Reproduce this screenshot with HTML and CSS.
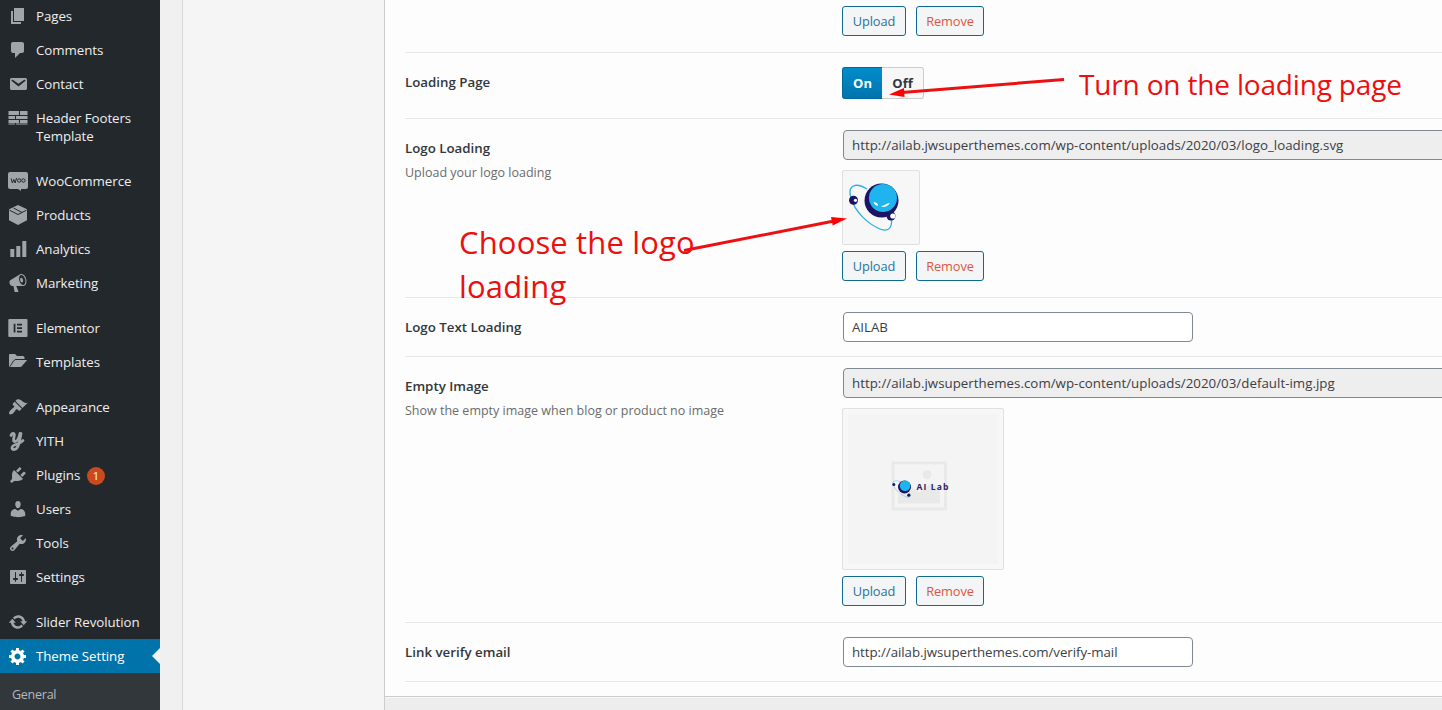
FILE: index.html
```
<!DOCTYPE html>
<html lang="en">
<head>
<meta charset="utf-8">
<title>Theme Setting</title>
<link rel="stylesheet" href="styles.css">
</head>
<body>
<div class="admin">
  <nav class="menu">
    <a class="item"><svg class="icon" viewBox="0 0 20 20"><path d="M6 15V2h10v13H6zm-1 1h8v2H3V5h2v11z"/></svg><span>Pages</span></a>
    <a class="item"><svg class="icon" viewBox="0 0 20 20"><path d="M5 2h9c1.1 0 2 .9 2 2v7c0 1.1-.9 2-2 2h-2l-5 5v-5H5c-1.1 0-2-.9-2-2V4c0-1.1.9-2 2-2z"/></svg><span>Comments</span></a>
    <a class="item"><svg class="icon" viewBox="0 0 20 20"><path d="M3.87 4h13.25C18.37 4 19 4.59 19 5.79v8.42c0 1.19-.63 1.79-1.88 1.79H3.87c-1.25 0-1.88-.6-1.88-1.79V5.79c0-1.2.63-1.79 1.88-1.79zm6.62 8.6l6.74-5.53c.24-.2.43-.66.13-1.07-.29-.41-.82-.42-1.17-.17l-5.7 3.86L4.8 5.83c-.35-.25-.88-.24-1.17.17-.3.41-.11.87.13 1.07z"/></svg><span>Contact</span></a>
    <a class="item"><svg class="icon" viewBox="0 0 20 20"><path d="M.5 3H11v4H.5zM12 3h7.500v4H12zM.5 8H7v3H.5zM8 8h11.500v3H8zM.5 12h10.500v3H.5zM12 12h7.500v3H12zM.5 15.600H7v.8H.5zM8 15.600h11.500v.8H8z"/></svg><span>Header Footers Template</span></a>
    <div class="separator"></div>
    <a class="item"><svg class="icon" viewBox="0 0 20 20"><path d="M2 1h16q2 0 2 2v13q0 2-2 2h-5v2l-3-2H2q-2 0-2-2V3q0-2 2-2z"/><path class="cut-line" d="M3.200 7.500l1.200 4.500 1.500-3.500 1.300 3.500 1.300-5"/><circle class="cut-line" cx="11.200" cy="9.500" r="1.700"/><circle class="cut-line" cx="15.400" cy="9.500" r="1.700"/></svg><span>WooCommerce</span></a>
    <a class="item"><svg class="icon" viewBox="0 0 20 20"><path d="M10 0l9 4.300v11L10 20l-9-4.700v-11z"/><path class="cut-line" d="M1.500 5.200L10 9.500l8.500-4.300M5.500 3l8.500 4.500"/></svg><span>Products</span></a>
    <a class="item"><svg class="icon" viewBox="0 0 20 20"><path d="M18 18V2h-4v16h4zm-6 0V7H8v11h4zm-6 0v-8H2v8h4z" transform="translate(.3 0)"/></svg><span>Analytics</span></a>
    <a class="item"><svg class="icon" viewBox="0 0 20 20"><path d="M18.15 5.94c.46 1.62.38 3.22-.02 4.48-.42 1.28-1.26 2.18-2.3 2.48-.16.06-.26.06-.4.06-.06.02-.12.02-.18.02-.06.02-.14.02-.22.02h-6.8l2.220 5.500c.02.14-.06.26-.14.34-.08.1-.24.16-.34.16H6.950c-.1 0-.26-.06-.34-.16-.08-.08-.16-.2-.14-.34l-1-5.500H4.250l-.02-.02c-.5.06-1.080-.18-1.540-.62s-.88-1.080-1.060-1.880c-.24-.8-.2-1.560-.02-2.200.18-.62.58-1.080 1.060-1.300l.02-.02 9-5.400c.1-.06.18-.1.24-.16.06-.04.14-.08.24-.12.16-.08.28-.12.5-.18 1.040-.3 2.240.1 3.220.98s1.840 2.240 2.260 3.860zm-2.580 5.980h-.02c.4-.1.74-.34 1.040-.7.58-.7.86-1.760.86-3.040 0-.64-.1-1.300-.28-1.980-.34-1.360-1.020-2.500-1.780-3.240s-1.680-1.100-2.460-.88c-.82.22-1.400.96-1.700 2-.32 1.040-.28 2.360.06 3.720.38 1.360 1 2.500 1.800 3.240.78.74 1.620 1.100 2.480.88zm-2.540-7.080c.22-.04.42-.02.62.04.38.16.76.48 1.020 1s.42 1.200.42 1.780c0 .3-.04.56-.12.8-.18.48-.44.84-.86.94-.34.1-.8-.06-1.140-.4s-.64-.86-.78-1.500c-.18-.62-.12-1.240.02-1.720s.48-.84.82-.94z"/></svg><span>Marketing</span></a>
    <div class="separator"></div>
    <a class="item"><svg class="icon" viewBox="0 0 20 20"><path fill-rule="evenodd" d="M1.300 1h17.200q1 0 1 1v16q0 1-1 1H1.300q-1 0-1-1V2q0-1 1-1zM5.700 5.800v8.700h1.700V5.800zM9 5.800v1.700h5V5.800zM9 9.300V11h5V9.300zM9 12.800v1.700h5v-1.700z"/></svg><span>Elementor</span></a>
    <a class="item"><svg class="icon" viewBox="0 0 20 20"><path d="M2 2h5l2 2h6q1.500 0 1.500 1.500V7H7.500L5 9l-3.800 6H1V3q0-1 1-1z"/><path d="M8 8h11.200L14 14q-.6 1-1.500 1H2l4-6q.8-1 2-1z"/></svg><span>Templates</span></a>
    <div class="separator"></div>
    <a class="item"><svg class="icon" viewBox="0 0 20 20"><path d="M14.48 11.06L7.41 3.99l1.5-1.5c.5-.56 2.3-.47 3.51.32 1.21.8 1.43 1.28 2.91 2.1 1.18.64 2.45 1.26 4.45.85zm-.71.71L6.7 4.7 4.93 6.47c-.39.39-.39 1.02 0 1.41l1.06 1.06c.39.39.39 1.03 0 1.42-.6.6-1.43 1.11-2.21 1.69-.35.26-.7.53-1.01.84C1.43 14.23.4 16.08 1.4 17.07c.99 1 2.84-.03 4.18-1.36.31-.31.58-.66.85-1.02.57-.78 1.08-1.61 1.69-2.21.39-.39 1.02-.39 1.41 0l1.06 1.06c.39.39 1.02.39 1.41 0z"/></svg><span>Appearance</span></a>
    <a class="item"><svg class="icon" viewBox="0 0 20 20"><g class="script"><path d="M3 4.500c1-3 4-3 3.200.5C5.500 8.500 5 10.500 7 10.500c2.500 0 4-3.500 5-8"/><path d="M13 2.500C11.500 9 11 18.500 6 18.500c-3 0-2.500-3.500.5-4.500 4-1.300 6.500-2 8.500-4.500"/></g></svg><span>YITH</span></a>
    <a class="item"><svg class="icon" viewBox="0 0 20 20"><path d="M13.11 4.36L9.87 7.6 8 5.73l3.24-3.24c.35-.34 1.05-.2 1.56.32.52.51.66 1.21.31 1.55zm-8 1.77l.91-1.12 9.01 9.01-1.19.84c-.71.71-2.63 1.16-3.82 1.16H6.14L4.9 17.26c-.59.59-1.54.59-2.12 0-.59-.58-.59-1.53 0-2.12l1.24-1.24v-3.88c0-1.13.4-3.19 1.09-3.89zm7.26 3.97l3.24-3.24c.34-.35 1.04-.21 1.55.31.52.51.66 1.21.31 1.55l-3.24 3.25z"/></svg><span>Plugins</span><b class="count">1</b></a>
    <a class="item"><svg class="icon" viewBox="0 0 20 20"><path d="M10 9.25c-2.27 0-2.73-3.44-2.73-3.44C7 4.02 7.82 2 9.97 2c2.16 0 2.98 2.02 2.71 3.81 0 0-.41 3.44-2.68 3.44zm0 2.57L12.72 10c2.39 0 4.52 2.33 4.52 4.53v2.49s-3.65 1.13-7.24 1.13c-3.65 0-7.24-1.13-7.24-1.13v-2.49c0-2.25 1.94-4.48 4.47-4.48z"/></svg><span>Users</span></a>
    <a class="item"><svg class="icon" viewBox="0 0 20 20"><path d="M16.68 9.77c-1.34 1.34-3.3 1.67-4.95.99l-5.41 6.52c-.99.99-2.59.99-3.58 0s-.99-2.59 0-3.57l6.52-5.42c-.68-1.65-.35-3.61.99-4.95 1.28-1.28 3.12-1.62 4.72-1.06l-2.89 2.89 2.82 2.82 2.86-2.87c.53 1.58.18 3.39-1.08 4.65zM3.81 16.21c.4.39 1.04.39 1.43 0 .4-.4.4-1.04 0-1.43-.39-.4-1.03-.4-1.43 0-.39.39-.39 1.03 0 1.43z"/></svg><span>Tools</span></a>
    <a class="item"><svg class="icon" viewBox="0 0 20 20"><path d="M18 16V4c0-.55-.45-1-1-1H3c-.55 0-1 .45-1 1v12c0 .55.45 1 1 1h14c.55 0 1-.45 1-1zM8 11h1c.55 0 1 .45 1 1s-.45 1-1 1H8v1.5c0 .28-.22.5-.5.5s-.5-.22-.5-.5V13H6c-.55 0-1-.45-1-1s.45-1 1-1h1V5.5c0-.28.22-.5.5-.5s.5.22.5.5V11zm5-2h-1c-.55 0-1-.45-1-1s.45-1 1-1h1V5.5c0-.28.22-.5.5-.5s.5.22.5.5V7h1c.55 0 1 .45 1 1s-.45 1-1 1h-1v5.5c0 .28-.22.5-.5.5s-.5-.22-.5-.5V9z"/></svg><span>Settings</span></a>
    <div class="separator"></div>
    <a class="item"><svg class="icon" viewBox="0 0 20 20"><path d="M10.2 3.28c3.53 0 6.43 2.61 6.92 6h2.08l-3.5 4-3.5-4h2.32c-.45-1.97-2.21-3.45-4.32-3.45-1.45 0-2.73.71-3.54 1.78L4.95 5.66C6.23 4.2 8.11 3.28 10.2 3.28zm-.4 13.44c-3.52 0-6.43-2.61-6.92-6H.8l3.5-4c1.17 1.33 2.33 2.67 3.5 4H5.48c.45 1.97 2.21 3.45 4.32 3.45 1.45 0 2.73-.71 3.54-1.78l1.71 1.95c-1.28 1.46-3.15 2.38-5.25 2.38z"/></svg><span>Slider Revolution</span></a>
    <a class="item current"><svg class="icon" viewBox="0 0 20 20"><path d="M18 12h-2.18c-.17.7-.44 1.35-.81 1.93l1.54 1.54-2.1 2.1-1.54-1.54c-.58.36-1.23.63-1.91.79V19H8v-2.18c-.68-.16-1.33-.43-1.91-.79l-1.54 1.54-2.12-2.12 1.54-1.54c-.36-.58-.63-1.23-.79-1.91H1V9.03h2.17c.16-.7.44-1.35.8-1.94L2.43 5.55l2.1-2.1 1.54 1.54c.58-.37 1.24-.64 1.93-.81V2h3v2.18c.68.16 1.33.43 1.91.79l1.54-1.54 2.12 2.12-1.54 1.54c.36.59.64 1.24.8 1.94H18V12zm-8.5 1.5c1.66 0 3-1.34 3-3s-1.34-3-3-3-3 1.34-3 3 1.34 3 3 3z"/></svg><span>Theme Setting</span></a>
    <div class="submenu">General</div>
  </nav>
  <div class="gutter"></div>
  <aside class="tabs"></aside>
  <main class="panel">
    <section class="row row-first">
      <div></div>
      <div class="buttons"><button class="btn upload">Upload</button><button class="btn remove">Remove</button></div>
    </section>
    <section class="row row-switch">
      <h4 class="label">Loading Page</h4>
      <div class="switch"><span class="on">On</span><span class="off">Off</span></div>
    </section>
    <section class="row row-logo">
      <div><h4 class="label">Logo Loading</h4><p class="hint">Upload your logo loading</p></div>
      <div>
        <div class="input wide">http://ailab.jwsuperthemes.com/wp-content/uploads/2020/03/logo_loading.svg</div>
        <div class="preview logo">
          <svg width="52" height="52" viewBox="0 0 52 52">
            <path class="orbit" d="M19 9C8 2-1 5 3 18C7 32 20 44 32 49C42 53 45 46 43 36"/>
            <circle class="navy" cx="33.500" cy="20.500" r="17"/>
            <circle class="sky" cx="35" cy="18" r="14"/>
            <path class="shine" d="M25.500 22q.8 3.500 4.500 3.700l-.3-1.900q-1.700-1.700-4.200-1.800zM33 26.500q5 1.800 9-3.500-3 .3-4 1.200-3 1.300-5 2.300z"/>
            <circle class="navy" cx="5.500" cy="20.300" r="4.500"/><circle class="white" cx="7.500" cy="20.300" r="1.600"/>
            <circle class="navy" cx="43" cy="36" r="4.500"/><circle class="white" cx="44.800" cy="36" r="2.600"/>
          </svg>
        </div>
        <div class="buttons"><button class="btn upload">Upload</button><button class="btn remove">Remove</button></div>
      </div>
    </section>
    <section class="row row-text">
      <h4 class="label">Logo Text Loading</h4>
      <div class="input text">AILAB</div>
    </section>
    <section class="row row-empty">
      <div><h4 class="label">Empty Image</h4><p class="hint">Show the empty image when blog or product no image</p></div>
      <div>
        <div class="input wide">http://ailab.jwsuperthemes.com/wp-content/uploads/2020/03/default-img.jpg</div>
        <div class="preview empty">
          <svg width="150" height="150" viewBox="1 .5 150 150">
            <rect class="photo" x="1" y=".5" width="150" height="150"/>
            <rect class="frame" x="46" y="49.500" width="52.500" height="46"/>
            <circle class="faint" cx="80" cy="61" r="4.500"/><path class="faint" d="M51 90V82l12-10 9 7 13-10 8 9v12z"/>
            <path class="orbit-small" d="M54 68q-9-2-8 2c1 6 8 12 15 14q3 0 1.500-5"/>
            <circle class="navy" cx="57.500" cy="73.500" r="6.500"/><circle class="sky" cx="58.100" cy="72.300" r="5.300"/>
            <circle class="navy" cx="46.800" cy="71" r="1.500"/><circle class="navy" cx="61.800" cy="81.700" r="1.600"/>
            <text class="brand" x="69.500" y="76.500" textLength="32">AI Lab</text>
          </svg>
        </div>
        <div class="buttons"><button class="btn upload">Upload</button><button class="btn remove">Remove</button></div>
      </div>
    </section>
    <section class="row row-text">
      <h4 class="label">Link verify email</h4>
      <div class="input text">http://ailab.jwsuperthemes.com/verify-mail</div>
    </section>
    <footer class="panel-footer"></footer>
  </main>
</div>
<div class="note note-switch">Turn on the loading page</div>
<div class="note note-logo">Choose the logo<br>loading</div>
<svg class="arrows" width="1442" height="710" viewBox="0 0 1442 710">
  <path class="shaft" d="M1064 79.500L902 92.500M684 250.500L834 221"/>
  <path class="head" d="M889 94.500l15-6.500.5 9zM847 218.500l-16-1.500 1.700 8.500z"/>
</svg>
</body>
</html>
```
FILE: styles.css
```
* { box-sizing: border-box; }
body { margin: 0; height: 710px; overflow: hidden; position: relative; background: #f1f1f1; color: #32373c; font-family: "Open Sans", "Noto Sans", sans-serif; }
.admin { display: flex; height: 710px; }

.menu { flex: none; width: 160px; background: #23282d; margin-top: -1px; height: 711px; }
.item { display: flex; align-items: flex-start; position: relative; min-height: 34px; padding: 8px 10px 8px 8px; color: #eee; font-size: 13.300px; line-height: 18px; letter-spacing: -.06px; font-weight: 500; }
.item span { width: 116px; margin-left: 8px; }
.icon { flex: none; width: 20px; height: 20px; margin: -1px 0; fill: #a0a5aa; }
.cut-line { fill: none; stroke: #23282d; stroke-width: 1; }
.script { fill: none; stroke: #a0a5aa; stroke-width: 2.800; stroke-linecap: round; }
.separator { height: 11px; }
.item .count { position: absolute; left: 87px; top: 9px; width: 18px; height: 18px; border-radius: 9px; background: #ca4a1f; color: #fff; font-size: 11px; line-height: 18px; text-align: center; letter-spacing: 0; font-weight: 500; }
.current { background: #0073aa; color: #fff; }
.current .icon { fill: #fff; }
.current::after { content: ""; position: absolute; right: 0; top: 9px; border: 8px solid transparent; border-right-color: #f1f1f1; border-left: 0; }
.submenu { background: #32373c; color: #b4b9be; height: 38px; padding: 13px 12px; font-size: 12.500px; line-height: 18px; letter-spacing: -.25px; }

.gutter { flex: none; width: 22px; background: #f0f0f0; }
.tabs { flex: none; width: 202px; background: #f5f5f5; border-left: 1px solid #d8d8d8; }
.panel { flex: 1; min-width: 0; padding-left: 20px; background: #fdfdfd; border-left: 1px solid #ccc; overflow: hidden; }
.row { display: grid; grid-template-columns: 437px 1fr; border-bottom: 1px solid #e7e7e7; }
.row-first { height: 53px; padding-top: 6px; }
.row-switch { height: 66px; padding-top: 14px; }
.row-logo { height: 179px; padding-top: 11px; }
.row-text { height: 59px; padding-top: 14px; }
.row-empty { height: 266px; padding-top: 11px; }
.row-logo .label, .row-empty .label { margin-top: 8px; }
.row-switch .label { margin-top: 5px; }
.row-text .label { margin-top: 5px; }
.label { margin: 0; font-size: 13.300px; line-height: 20px; font-weight: 600; color: #32373c; }
.hint { margin: 6px 0 0; font-size: 12.500px; line-height: 18px; color: #6b6b6b; }

.input { height: 30px; margin-left: 1px; padding: 0 8px; border: 1px solid #7e8993; border-radius: 4px; background: #fff; font-size: 13.300px; line-height: 28px; color: #3a4046; white-space: nowrap; }
.input.text { width: 350px; letter-spacing: -.05px; }
.input.wide { width: 700px; background: #eee; letter-spacing: .025px; }
.buttons { display: flex; gap: 10px; align-items: flex-start; }
.btn { height: 30px; padding: 0; border: 1px solid #11698f; border-radius: 3px; background: #f3f5f6; font: 12.800px/28px "Open Sans", sans-serif; letter-spacing: -.1px; color: #2a7396; }
.upload { width: 64px; }
.remove { width: 68px; color: #dd5541; }
.switch { display: flex; height: 32px; font-size: 13px; line-height: 30px; font-weight: 700; text-align: center; }
.on { width: 40px; border: 1px solid #006799; border-right: 0; border-radius: 3px 0 0 3px; background: linear-gradient(#008dcc, #0074ad); color: #fff; }
.off { width: 42px; border: 1px solid #ccc; border-left: 0; border-radius: 0 3px 3px 0; background: #f7f7f7; color: #32373c; }
.preview { margin: 10px 0 6px; border: 1px solid #e0e0e0; border-radius: 2px; background: #f7f7f7; }
.preview svg { display: block; }
.logo { width: 78px; height: 75px; padding: 9px 5px; }
.empty { width: 162px; height: 162px; padding: 5px; }
.orbit { fill: none; stroke: #2aafe3; stroke-width: 1.300; }
.orbit-small { fill: none; stroke: #74bfe5; stroke-width: .6; }
.navy { fill: #1b1464; }
.sky { fill: #20b4ef; }
.white, .shine { fill: #fff; }
.photo { fill: #f4f4f4; }
.frame { fill: none; stroke: #e9e9e9; stroke-width: 3; }
.faint { fill: #e9e9e9; }
.brand { fill: #29235c; font: 700 8.500px "Open Sans", sans-serif; }
.panel-footer { margin: 14px 0 0 -20px; height: 14px; border-top: 1px solid #ccc; background: #ededed; box-shadow: inset 0 1px #f8f8f8; }

.note { position: absolute; color: #ec0f0f; white-space: nowrap; }
.note-switch { left: 1079px; top: 63px; font-size: 28px; line-height: 42px; letter-spacing: -.17px; }
.note-logo { left: 459px; top: 220px; font-size: 31px; line-height: 44px; letter-spacing: .15px; }
.arrows { position: absolute; left: 0; top: 0; }
.shaft { fill: none; stroke: #ec1010; stroke-width: 3; }
.head { fill: #f00; }
```
